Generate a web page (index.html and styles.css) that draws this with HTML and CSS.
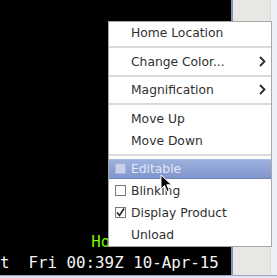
FILE: index.html
```html
<!DOCTYPE html>
<html>
<head>
<meta charset="utf-8">
<link rel="stylesheet" href="styles.css">
</head>
<body>
<div class="screen">
  <div class="main">
    <div class="canvas">
      <div class="label green">Home Location</div>
      <div class="label white">t  Fri 00:39Z 10-Apr-15</div>
    </div>
    <div class="side"><div class="strip"></div></div>
  </div>
  <div class="bottom"></div>

  <div class="menu">
    <div class="item">Home Location</div>
    <div class="sep"></div>
    <div class="item">Change Color...<svg class="chev" width="7" height="11" viewBox="0 0 7 11"><path d="M1 1 L5.5 5.5 L1 10" fill="none" stroke="#2a2a2a" stroke-width="1.8"/></svg></div>
    <div class="sep"></div>
    <div class="item">Magnification<svg class="chev" width="7" height="11" viewBox="0 0 7 11"><path d="M1 1 L5.5 5.5 L1 10" fill="none" stroke="#2a2a2a" stroke-width="1.8"/></svg></div>
    <div class="sep"></div>
    <div class="item">Move Up</div>
    <div class="item">Move Down</div>
    <div class="sep"></div>
    <div class="item check active"><span class="box"></span>Editable</div>
    <div class="item check"><span class="box"></span>Blinking</div>
    <div class="item check"><span class="box"><svg width="11" height="11" viewBox="0 0 11 11"><path d="M2 5.5 L4.5 8.5 L9 1.5" fill="none" stroke="#222" stroke-width="1.6"/></svg></span>Display Product</div>
    <div class="item">Unload</div>
  </div>

  <svg class="cursor" width="13" height="19" viewBox="0 0 13 19"><path d="M1 1 L1 15 L4.5 11.5 L7 17.5 L9.2 16.5 L6.8 10.8 L11.5 10.8 Z" fill="#000" stroke="#fff" stroke-width="1"/></svg>
</div>
</body>
</html>
```

FILE: styles.css
```css
html, body {
  margin: 0;
  padding: 0;
}
body {
  width: 277px;
  height: 278px;
  overflow: hidden;
  background: #e8e7e4;
}
.screen {
  position: relative;
  width: 277px;
  height: 278px;
}
.main {
  display: flex;
  height: 275px;
}
.canvas {
  width: 231px;
  background: #000;
  border-right: 2px solid #8190b0;
  display: flex;
  flex-direction: column;
  justify-content: flex-end;
  padding: 0 16px 2px 0;
  box-sizing: border-box;
  flex: 0 0 233px;
  overflow: hidden;
}
.label {
  font-family: "DejaVu Sans Mono", monospace;
  font-size: 15.8px;
  line-height: 21px;
  text-align: right;
  white-space: pre;
}
.green { color: #7cfc00; }
.white { color: #f4f4f4; }
.side {
  flex: 1;
  display: flex;
  justify-content: flex-end;
  background: #e8e7e4;
}
.strip {
  width: 6px;
  background: #eef0f7;
  border-left: 1px solid #dcdde4;
}
.bottom {
  height: 3px;
  background: #dfe4ee;
  border-top: 1px solid #9aa6c0;
  box-sizing: border-box;
}
.menu {
  position: absolute;
  left: 108px;
  top: 21px;
  width: 164px;
  box-sizing: border-box;
  background: #fff;
  border: 1px solid #a8a8a8;
  font-family: "DejaVu Sans", sans-serif;
  font-size: 12.3px;
  color: #303030;
}
.item {
  position: relative;
  height: 22px;
  line-height: 22px;
  padding-left: 22px;
  display: flex;
  align-items: center;
}
.sep {
  height: 6.5px;
  display: flex;
  align-items: center;
}
.sep::before {
  content: "";
  display: block;
  width: 100%;
  height: 2px;
  background: #dadada;
}
.chev {
  position: absolute;
  right: 5px;
  top: 5px;
}
.box {
  position: absolute;
  left: 6px;
  top: 5px;
  width: 11px;
  height: 11px;
  box-sizing: border-box;
  border: 1px solid #7a7a7a;
  background: #fff;
  display: flex;
  align-items: center;
  justify-content: center;
}
.box svg {
  position: absolute;
  left: -1px;
  top: -1px;
}
.active {
  color: #e2e7f6;
}
.active::before {
  content: "";
  position: absolute;
  left: 0;
  right: 0;
  top: 1px;
  bottom: 1px;
  background: linear-gradient(#9db0dd, #8096cc);
  border-top: 1px solid #aab9e0;
  border-bottom: 1px solid #6e83bd;
}
.active .box {
  background: #c9d1ea;
  border-color: #a9b5d8;
  z-index: 1;
}
.active {
  z-index: 0;
}
.active > :not(.box) { }
.item.active {
  isolation: isolate;
}
.item.active::before { z-index: -1; }
.cursor {
  position: absolute;
  left: 160px;
  top: 174px;
}
```
